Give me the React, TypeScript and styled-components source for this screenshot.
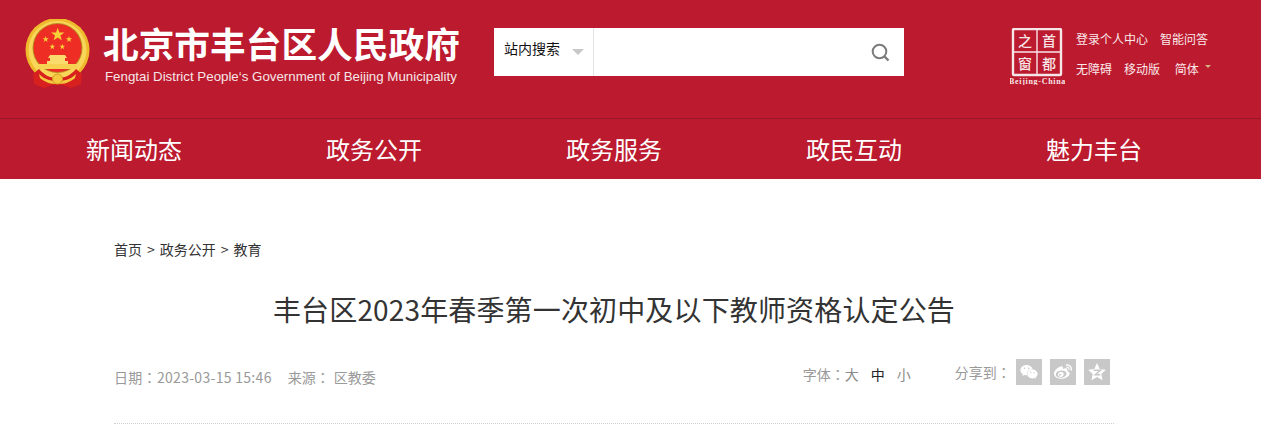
import React from 'react';
import styled, { createGlobalStyle } from 'styled-components';
import { FaWeixin, FaWeibo } from 'react-icons/fa';

const CJK = `"Noto Sans CJK SC", "Liberation Sans", sans-serif`;

const GlobalStyle = createGlobalStyle`
  html, body { margin: 0; padding: 0; background: #fff; overflow: hidden; }
  body { font-family: ${CJK}; }
  a { text-decoration: none; color: inherit; }
`;

const Page = styled.div`
  width: 1261px;
  height: 425px;
  overflow: hidden;
`;

const TopBar = styled.header`
  height: 118px;
  background: #bc1a2e;
  border-bottom: 1px solid #9a1526;
  display: flex;
  align-items: flex-start;
  padding-left: 25px;
`;

const Brand = styled.div`
  width: 469px;
  flex-shrink: 0;
  display: flex;
  padding-top: 19px;

  svg {
    flex-shrink: 0;
  }
`;

const BrandText = styled.div`
  margin-left: 13px;
  color: #fff;
`;

const BrandName = styled.div`
  font-size: 35.7px;
  font-weight: 700;
  line-height: 48px;
  white-space: nowrap;
`;

const BrandEnglish = styled.div`
  font-family: "Liberation Sans", sans-serif;
  font-size: 13.3px;
  line-height: 18px;
  margin-top: 1px;
  margin-left: 2px;
  white-space: nowrap;
  color: #f6e6e8;
`;

const SearchBox = styled.div`
  width: 410px;
  height: 48px;
  margin-top: 28px;
  background: #fff;
  display: flex;
  align-items: center;
`;

const SearchScope = styled.div`
  width: 100px;
  height: 48px;
  box-sizing: border-box;
  border-right: 1px solid #e4e4e4;
  padding-left: 10px;
  display: flex;
  align-items: center;
  font-size: 14px;
  color: #111;
`;

const ScopeLabel = styled.span`
  padding-bottom: 8px;
`;

const Caret = styled.span<{ $size: number; $color: string }>`
  display: block;
  width: 0;
  height: 0;
  border-left: ${(p) => p.$size}px solid transparent;
  border-right: ${(p) => p.$size}px solid transparent;
  border-top: ${(p) => p.$size}px solid ${(p) => p.$color};
`;

const ScopeCaret = styled(Caret)`
  margin-left: 12px;
`;

const SearchField = styled.div`
  flex: 1;
  display: flex;
  justify-content: flex-end;
  padding: 2px 13px 0 0;
`;

const Tools = styled.div`
  display: flex;
  margin-left: 106px;
  padding-top: 24px;
`;

const StampLink = styled.a`
  display: block;
  width: 55px;
  margin-top: 4px;
`;

const LinkColumn = styled.div`
  margin-left: 11px;
  color: #fbe9eb;
  font-size: 12px;
`;

const LinkRow = styled.div<{ $gap: number }>`
  display: flex;
  align-items: center;
  gap: ${(p) => p.$gap}px;
  height: 30px;
  line-height: 22px;
  white-space: nowrap;
`;

const LangCaret = styled(Caret)`
  margin: -5px 0 0 -6px;
`;

const Nav = styled.nav`
  height: 60px;
  background: #bc1a2e;
  display: flex;
  padding-left: 14px;
`;

const NavItem = styled.a`
  width: 240px;
  text-align: center;
  font-size: 24px;
  line-height: 60px;
  color: #fff;
`;

const Article = styled.main`
  width: 1000px;
  margin-left: 114px;
`;

const Crumbs = styled.div`
  display: flex;
  gap: 5px;
  margin-top: 59px;
  font-size: 14px;
  line-height: 22px;
  color: #333;
`;

const Title = styled.h1`
  margin: 27px 0 0;
  font-size: 28px;
  font-weight: 400;
  line-height: 44px;
  letter-spacing: 0.15px;
  text-align: center;
  color: #333;
`;

const MetaBar = styled.div`
  display: flex;
  align-items: flex-start;
  margin-top: 28px;
  padding-bottom: 38px;
  border-bottom: 1px dotted #cfcfcf;
  height: 26px;
`;

const MetaText = styled.span<{ $left?: number; $spaced?: boolean }>`
  margin-left: ${(p) => p.$left || 0}px;
  font-size: 14px;
  line-height: 36px;
  letter-spacing: ${(p) => (p.$spaced ? '0.3px' : '0')};
  color: #999;
  white-space: nowrap;
`;

const Colon = styled.span`
  font-family: "Noto Sans CJK TC", sans-serif;
`;

const FontTools = styled.div`
  display: flex;
  margin-left: 427px;
  font-size: 14px;
  line-height: 30px;
  color: #999;
  gap: 12px;
`;

const FontSize = styled.a<{ $active?: boolean }>`
  color: ${(p) => (p.$active ? '#222' : '#8c8c8c')};
`;

const Share = styled.div`
  display: flex;
  margin-left: 44px;
  gap: 8px;
`;

const ShareLabel = styled.span`
  font-size: 14px;
  line-height: 26px;
  color: #999;
  white-space: nowrap;
  margin-right: -3px;
`;

const ShareIcon = styled.a`
  width: 26px;
  height: 26px;
  background: #c8c8c8;
  color: #fff;
  display: flex;
  align-items: center;
  justify-content: center;
  font-size: 18px;
`;

const ShareGroup = styled.div`
  display: flex;
  gap: 8px;
`;

function Seal() {
  const star = (cx: number, cy: number, r: number) => {
    const pts: string[] = [];
    for (let i = 0; i < 10; i++) {
      const rad = i % 2 ? r * 0.4 : r;
      const a = (Math.PI * i) / 5 - Math.PI / 2;
      pts.push(`${(cx + rad * Math.cos(a)).toFixed(2)},${(cy + rad * Math.sin(a)).toFixed(2)}`);
    }
    return <polygon points={pts.join(' ')} fill="#f7d038" />;
  };
  return (
    <svg width="65" height="70" viewBox="0 0 65 70">
      <circle cx="32.5" cy="31" r="32" fill="#efbb2c" />
      <circle cx="32.5" cy="31" r="29" fill="#f9d65a" />
      <circle cx="32.5" cy="29" r="25" fill="#b98a1f" />
      <circle cx="32.5" cy="29" r="24" fill="#ee2d24" />
      {star(32.7, 15.7, 7)}
      {star(20.7, 20.3, 3.2)}
      {star(44, 20.3, 3.2)}
      {star(27.3, 27.7, 3)}
      {star(37.3, 27.7, 3)}
      <path d="M25 36h15l2 3h-2v3h3v3H22v-3h3v-3h-2z" fill="#f9dc6b" />
      <rect x="13" y="45" width="39" height="5" fill="#f7d152" />
      <path d="M8 55l6-5c6 7 12 9 18.500 9s12.500-2 18.500-9l6 5-1 10-10 4-8-3H27l-8 3-10-4z" fill="#d8201f" />
      <path d="M14 55c6 6 12 7 18.500 7s12.500-1 18.500-7l-1 4c-6 5-11 6-17.500 6s-11.500-1-17.500-6z" fill="#f5c93f" />
      <circle cx="32.500" cy="60" r="5" fill="#f5c93f" stroke="#d39a1e" />
    </svg>
  );
}

function Stamp() {
  return (
    <svg width="55" height="57" viewBox="0 0 55 57">
      <rect x="3" y="1" width="48" height="46" rx="1" fill="none" stroke="#f7e6e8" strokeWidth="2.4" />
      <path d="M27 1v46M3 24h48" stroke="#f7e6e8" strokeWidth="1.4" />
      <g fill="#f7e6e8" fontFamily={CJK} fontSize="14" fontWeight="500" textAnchor="middle">
        <text x="15" y="18">之</text>
        <text x="39" y="18">首</text>
        <text x="15" y="41">窗</text>
        <text x="39" y="41">都</text>
      </g>
      <text x="27.5" y="56" fill="#f7e6e8" fontFamily='"Liberation Serif", serif' fontSize="8" fontWeight="700" letterSpacing="0.7" textAnchor="middle">Beijing-China</text>
    </svg>
  );
}

function SearchIcon() {
  return (
    <svg width="20" height="20" viewBox="0 0 20 20" fill="none" stroke="#7b7b7b">
      <circle cx="8.5" cy="8.5" r="6.8" strokeWidth="2" />
      <path d="M13.5 13.5l4 4" strokeWidth="2.4" />
    </svg>
  );
}

function QzoneIcon() {
  return (
    <svg width="20" height="20" viewBox="0 0 18 18">
      <path d="M9 1l2.4 5.2 5.6.7-4.1 3.900 1.100 5.600L9 13.600l-5 2.800 1.100-5.600L1 6.900l5.600-.7z" fill="#fff" />
      <path d="M6 7.500h6L7.500 11.500H12" fill="none" stroke="#c8c8c8" strokeWidth="1.4" />
    </svg>
  );
}

const navItems = ['新闻动态', '政务公开', '政务服务', '政民互动', '魅力丰台'];

export default function App() {
  return (
    <Page>
      <GlobalStyle />
      <TopBar>
        <Brand>
          <Seal />
          <BrandText>
            <BrandName>北京市丰台区人民政府</BrandName>
            <BrandEnglish>Fengtai District People‘s Government of Beijing Municipality</BrandEnglish>
          </BrandText>
        </Brand>
        <SearchBox>
          <SearchScope>
            <ScopeLabel>站内搜索</ScopeLabel>
            <ScopeCaret $size={6} $color="#c8c8c8" />
          </SearchScope>
          <SearchField>
            <SearchIcon />
          </SearchField>
        </SearchBox>
        <Tools>
          <StampLink href="#">
            <Stamp />
          </StampLink>
          <LinkColumn>
            <LinkRow $gap={12}>
              <a href="#">登录个人中心</a>
              <a href="#">智能问答</a>
            </LinkRow>
            <LinkRow $gap={12}>
              <a href="#">无障碍</a>
              <a href="#">移动版</a>
              <a href="#">&nbsp;简体</a>
              <LangCaret $size={3} $color="#d8b27c" />
            </LinkRow>
          </LinkColumn>
        </Tools>
      </TopBar>
      <Nav>
        {navItems.map((item) => (
          <NavItem href="#" key={item}>{item}</NavItem>
        ))}
      </Nav>
      <Article>
        <Crumbs>
          <a href="#">首页</a>
          <span>&gt;</span>
          <a href="#">政务公开</a>
          <span>&gt;</span>
          <a href="#">教育</a>
        </Crumbs>
        <Title>丰台区2023年春季第一次初中及以下教师资格认定公告</Title>
        <MetaBar>
          <MetaText $spaced>日期<Colon>：</Colon>2023-03-15 15:46</MetaText>
          <MetaText $left={16}>来源<Colon>：</Colon></MetaText>
          <MetaText $left={4}>区教委</MetaText>
          <FontTools>
            <span>字体<Colon>：</Colon><FontSize href="#">大</FontSize></span>
            <FontSize href="#" $active>中</FontSize>
            <FontSize href="#">小</FontSize>
          </FontTools>
          <Share>
            <ShareLabel>分享到<Colon>：</Colon></ShareLabel>
            <ShareGroup>
              <ShareIcon href="#"><FaWeixin /></ShareIcon>
              <ShareIcon href="#"><FaWeibo /></ShareIcon>
              <ShareIcon href="#"><QzoneIcon /></ShareIcon>
            </ShareGroup>
          </Share>
        </MetaBar>
      </Article>
    </Page>
  );
}
